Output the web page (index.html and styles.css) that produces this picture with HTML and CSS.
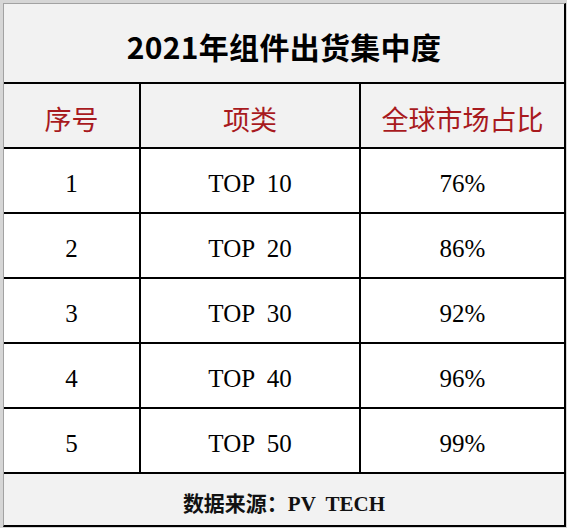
FILE: index.html
```html
<!DOCTYPE html>
<html lang="zh">
<head>
<meta charset="utf-8">
<link rel="stylesheet" href="styles.css">
</head>
<body>
<div class="frame">
  <div class="sheet">
    <div class="title">2021年组件出货集中度</div>
    <div class="row head">
      <div class="cell c1">序号</div>
      <div class="cell c2">项类</div>
      <div class="cell c3">全球市场占比</div>
    </div>
    <div class="row data">
      <div class="cell c1">1</div>
      <div class="cell c2">TOP  10</div>
      <div class="cell c3">76%</div>
    </div>
    <div class="row data">
      <div class="cell c1">2</div>
      <div class="cell c2">TOP  20</div>
      <div class="cell c3">86%</div>
    </div>
    <div class="row data">
      <div class="cell c1">3</div>
      <div class="cell c2">TOP  30</div>
      <div class="cell c3">92%</div>
    </div>
    <div class="row data">
      <div class="cell c1">4</div>
      <div class="cell c2">TOP  40</div>
      <div class="cell c3">96%</div>
    </div>
    <div class="row data">
      <div class="cell c1">5</div>
      <div class="cell c2">TOP  50</div>
      <div class="cell c3">99%</div>
    </div>
    <div class="footer">数据来源：PV  TECH</div>
  </div>
</div>
</body>
</html>
```

FILE: styles.css
```css
html, body {
  margin: 0;
  padding: 0;
  background: #ffffff;
}

.frame {
  width: 567px;
  height: 531px;
  box-sizing: border-box;
  padding: 3px 0 0 3px;
  background: linear-gradient(to bottom, #d6d6d6 0, #d6d6d6 528px, #ffffff 528px);
}

.sheet {
  width: 560px;
  border-top: 1px solid #a2a2a2;
  border-left: 1px solid #a2a2a2;
  border-right: 2px solid #000;
  border-bottom: 2px solid #000;
  background: #f2f2f2;
}

.title {
  height: 80px;
  border-bottom: 2px solid #000;
  display: flex;
  align-items: center;
  justify-content: center;
  font-family: "Noto Sans CJK SC", "Noto Sans", sans-serif;
  font-weight: 700;
  font-size: 30px;
  letter-spacing: 0.3px;
  color: #000;
  padding-top: 6px;
  box-sizing: border-box;
}

.row {
  display: flex;
  height: 65px;
  border-bottom: 2px solid #000;
  box-sizing: border-box;
}

.cell {
  display: flex;
  align-items: center;
  justify-content: center;
  box-sizing: border-box;
  white-space: pre;
}

.c1 {
  width: 137px;
  border-right: 2px solid #000;
}

.c2 {
  width: 220px;
  border-right: 2px solid #000;
}

.c3 {
  width: 203px;
}

.head .cell {
  font-family: "Noto Sans CJK SC", sans-serif;
  font-size: 27px;
  font-weight: 400;
  color: #a81a1e;
  padding-top: 6px;
}

.data {
  background: #ffffff;
}

.data .cell {
  font-family: "Liberation Serif", "Noto Sans CJK SC", serif;
  font-size: 25px;
  color: #000;
  padding-top: 6px;
}

.footer {
  height: 51px;
  display: flex;
  align-items: center;
  justify-content: center;
  white-space: pre;
  font-family: "Liberation Serif", "Noto Sans CJK SC", serif;
  font-weight: 700;
  font-size: 21px;
  color: #111;
  padding-top: 4px;
  box-sizing: border-box;
}
```
